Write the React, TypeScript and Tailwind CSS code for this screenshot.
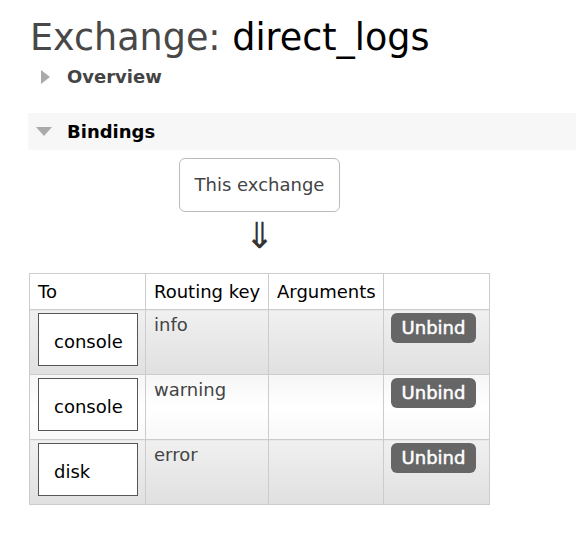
import React from "react";

const rows = [
  { to: "console", key: "info", alt: true },
  { to: "console", key: "warning", alt: false },
  { to: "disk", key: "error", alt: true },
];

export default function App() {
  return (
    <div className="min-h-screen bg-white text-[18px] leading-[22px] text-[#444]" style={{ fontFamily: '"DejaVu Sans", Verdana, sans-serif' }}>
      <div className="pl-[28px] pt-[16px]">
        {/* Title */}
        <h1 className="pl-[2px] text-[36.5px] leading-[44px] text-[#484848]">
          Exchange: <span className="text-black">direct_logs</span>
        </h1>

        {/* Overview (collapsed) */}
        <div className="mt-[6px] flex items-center h-[22px]">
          <span className="ml-[13px] w-0 h-0 border-y-[7px] border-y-transparent border-l-[9px] border-l-[#aaa]" />
          <span className="ml-[17px] font-bold text-[#444]">Overview</span>
        </div>

        {/* Bindings (expanded) */}
        <div className="mt-[25px] flex items-center h-[37px] bg-[#f7f7f7]">
          <span className="ml-[8px] w-0 h-0 border-x-[8px] border-x-transparent border-t-[9px] border-t-[#aaa]" />
          <span className="ml-[15px] font-bold text-black">Bindings</span>
        </div>

        {/* This exchange */}
        <div className="ml-[151px] mt-[8px] w-[161px] h-[54px] flex items-center justify-center border border-[#bbb] rounded-[6px] text-[#444]">
          This exchange
        </div>
        <div className="ml-[151px] w-[161px] text-center text-[36px] leading-[40px] text-[#333] mt-[4px]">⇓</div>

        {/* Bindings table */}
        <table className="mt-[17px] ml-[1px] border-collapse border border-[#ccc]">
          <thead>
            <tr className="bg-white text-black">
              <th className="w-[116px] border border-[#ccc] font-normal text-left pl-[8px] pt-[7px] pb-[6px]">To</th>
              <th className="w-[123px] border border-[#ccc] font-normal text-left pl-[8px] pt-[7px] pb-[6px]">Routing key</th>
              <th className="w-[115px] border border-[#ccc] font-normal text-left pl-[8px] pt-[7px] pb-[6px]">Arguments</th>
              <th className="w-[106px] border border-[#ccc]" />
            </tr>
          </thead>
          <tbody>
            {rows.map((r, i) => {
              const bg = r.alt
                ? "bg-gradient-to-b from-[#f0f0f0] to-[#e0e0e0]"
                : "bg-gradient-to-b from-[#f6f6f6] via-white to-[#f8f8f8]";
              return (
                <tr key={i} className="h-[65px]">
                  <td className={`${bg} border border-[#ccc] align-top pl-[8px] pt-[3px] pb-[7px]`}>
                    <div className="w-[100px] h-[53px] bg-white border border-[#555] text-black pl-[15px] pt-[17px]">{r.to}</div>
                  </td>
                  <td className={`${bg} border border-[#ccc] align-top pl-[8px] pt-[4px]`}>{r.key}</td>
                  <td className={`${bg} border border-[#ccc]`} />
                  <td className={`${bg} border border-[#ccc] align-top pl-[7px] pt-[3px]`}>
                    <button className="w-[85px] h-[30px] rounded-[6px] bg-[#666] text-white text-[18px] leading-[30px] [-webkit-text-stroke:0.5px_#fff]">Unbind</button>
                  </td>
                </tr>
              );
            })}
          </tbody>
        </table>
      </div>
    </div>
  );
}
